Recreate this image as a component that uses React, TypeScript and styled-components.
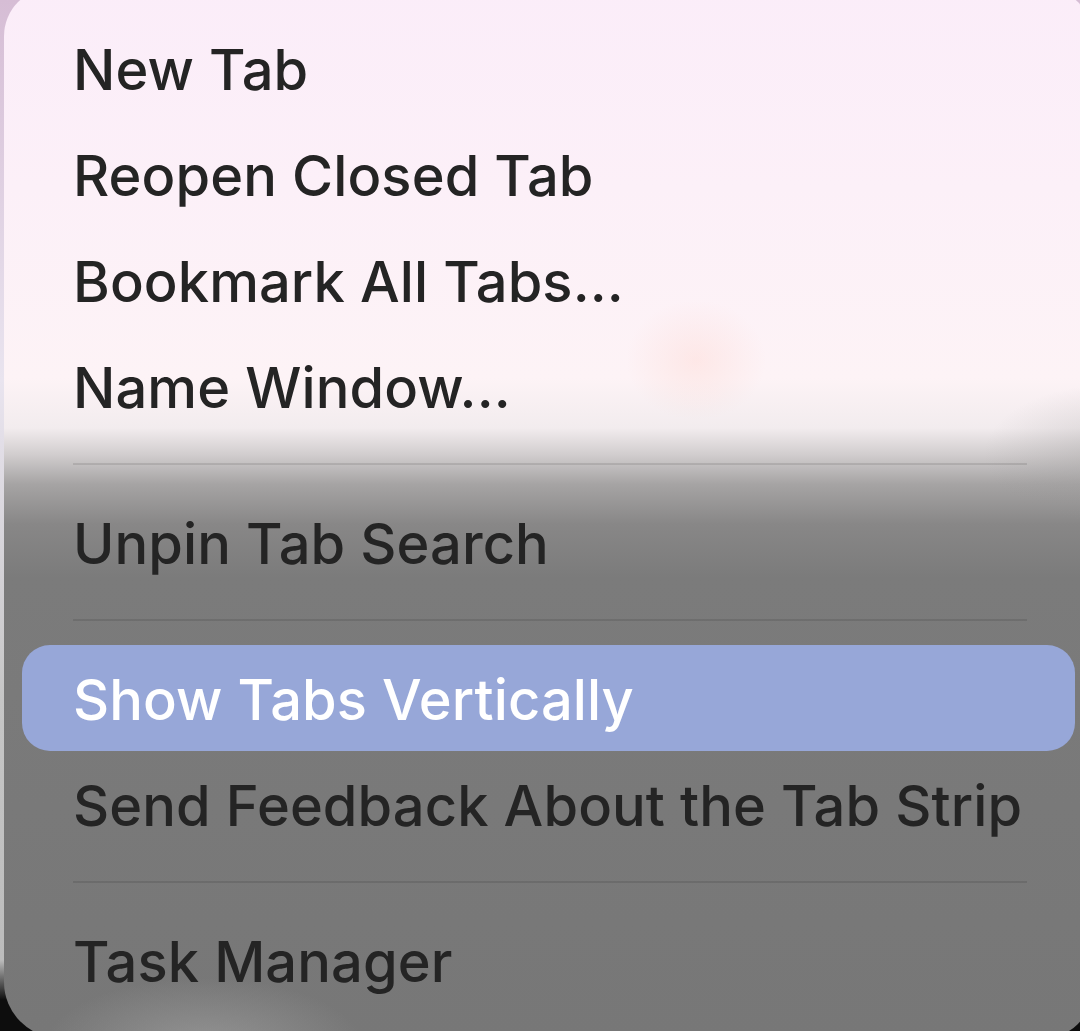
import React from 'react'
import styled, { createGlobalStyle } from 'styled-components'

const GlobalStyle = createGlobalStyle`
  html, body {
    margin: 0;
    padding: 0;
    width: 1080px;
    height: 1031px;
    overflow: hidden;
  }

  body {
    background: linear-gradient(
      to bottom,
      #d6bdd5 0px,
      #e9e4ef 380px,
      #c6c6c6 700px,
      #bcbcbc 960px,
      #0d0d0d 1000px
    );
    font-family: Inter, 'Noto Sans', 'Liberation Sans', sans-serif;
    -webkit-font-smoothing: antialiased;
  }

  #root {
    display: flow-root;
  }
`

const Menu = styled.div`
  margin: -12px 0 0 4px;
  width: 1088px;
  height: 1050px;
  box-sizing: border-box;
  padding: 27px 0 0;
  border-radius: 48px 48px 48px 56px;
  display: flex;
  flex-direction: column;
  background:
    radial-gradient(ellipse 70px 60px at 692px 372px, rgba(255, 205, 195, 0.3), rgba(255, 205, 195, 0)),
    radial-gradient(ellipse 130px 70px at 1110px 466px, rgba(150, 148, 148, 0.3), rgba(150, 148, 148, 0)),
    radial-gradient(ellipse 160px 70px at 200px 1060px, rgba(190, 190, 190, 0.4), rgba(190, 190, 190, 0)),
    linear-gradient(
      to bottom,
      #fbedf9 0px,
      #fcf0f8 200px,
      #fdf3f6 390px,
      #f2ecee 440px,
      #d2cecf 466px,
      #a6a4a4 496px,
      #888787 536px,
      #7b7b7b 590px,
      #777777 100%
    );
`

const Item = styled.div<{ active?: boolean }>`
  height: 106px;
  box-sizing: border-box;
  margin: 0 17px 0 18px;
  padding: 4px 0 0 51px;
  line-height: 102px;
  font-size: 56px;
  font-weight: 500;
  letter-spacing: 0.1px;
  white-space: nowrap;
  border-radius: 28px;
  color: ${(p) => (p.active ? '#ffffff' : '#242424')};
  background: ${(p) => (p.active ? '#97a7d8' : 'transparent')};
`

const Separator = styled.div`
  height: 50px;
  display: flex;
  align-items: center;
  margin: 0 65px 0 69px;

  &::after {
    content: '';
    flex: 1;
    height: 2px;
    background: rgba(0, 0, 0, 0.1);
  }
`

type Entry = { label: string; active?: boolean } | 'sep'

const entries: Entry[] = [
  { label: 'New Tab' },
  { label: 'Reopen Closed Tab' },
  { label: 'Bookmark All Tabs...' },
  { label: 'Name Window...' },
  'sep',
  { label: 'Unpin Tab Search' },
  'sep',
  { label: 'Show Tabs Vertically', active: true },
  { label: 'Send Feedback About the Tab Strip' },
  'sep',
  { label: 'Task Manager' },
]

const App = () => {
  return (
    <>
      <GlobalStyle />
      <Menu>
        {entries.map((entry, i) =>
          entry === 'sep' ? (
            <Separator key={i} />
          ) : (
            <Item key={i} active={entry.active}>
              {entry.label}
            </Item>
          )
        )}
      </Menu>
    </>
  )
}

export default App
